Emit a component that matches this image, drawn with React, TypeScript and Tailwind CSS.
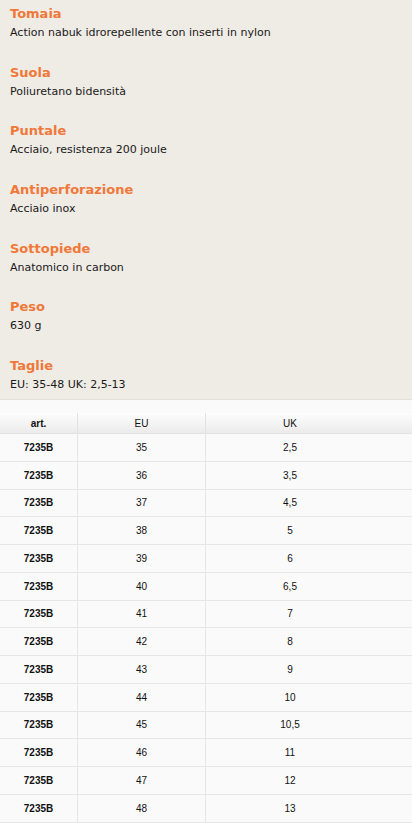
const specs = [
  { label: 'Tomaia', value: 'Action nabuk idrorepellente con inserti in nylon' },
  { label: 'Suola', value: 'Poliuretano bidensità' },
  { label: 'Puntale', value: 'Acciaio, resistenza 200 joule' },
  { label: 'Antiperforazione', value: 'Acciaio inox' },
  { label: 'Sottopiede', value: 'Anatomico in carbon' },
  { label: 'Peso', value: '630 g' },
  { label: 'Taglie', value: 'EU: 35-48 UK: 2,5-13' },
];

const sizes: [string, string][] = [
  ['35', '2,5'], ['36', '3,5'], ['37', '4,5'], ['38', '5'], ['39', '6'],
  ['40', '6,5'], ['41', '7'], ['42', '8'], ['43', '9'], ['44', '10'],
  ['45', '10,5'], ['46', '11'], ['47', '12'], ['48', '13'],
];

export default function App() {
  return (
    <div className="w-[412px] h-[823px] overflow-hidden bg-[#fafafa]">
      {/* Product specs */}
      <div className="bg-[#efebe5] pt-[4px] h-[400px] border-b border-[#e4e0da] font-['DejaVu_Sans',sans-serif]">
        {specs.map(s => (
          <div key={s.label} className="h-[58.67px] px-[10px]">
            <div className="text-[13px] leading-[19px] font-bold text-[#f07838]">{s.label}</div>
            <div className="text-[11px] leading-[19px] text-[#1a1a1a]">{s.value}</div>
          </div>
        ))}
      </div>

      {/* Size table */}
      <div className="mt-[13px] font-['Liberation_Sans',Arial,sans-serif] text-[10px] text-[#111]">
        <div className="flex h-[21px] bg-gradient-to-b from-[#fdfdfd] to-[#ebebeb] border-b border-[#e2e2e2]">
          <div className="w-[78px] flex items-center justify-center font-bold border-r border-[#e2e2e2]">art.</div>
          <div className="w-[128px] flex items-center justify-center border-r border-[#e2e2e2]">EU</div>
          <div className="flex-1 flex items-center justify-center pr-[38px]">UK</div>
        </div>
        {sizes.map(([eu, uk]) => (
          <div key={eu} className="flex h-[27.75px] bg-[#fafafa] border-b border-[#e6e6e6]">
            <div className="w-[78px] flex items-center justify-center font-bold border-r border-[#e6e6e6]">7235B</div>
            <div className="w-[128px] flex items-center justify-center border-r border-[#e6e6e6]">{eu}</div>
            <div className="flex-1 flex items-center justify-center pr-[38px]">{uk}</div>
          </div>
        ))}
      </div>
    </div>
  );
}
